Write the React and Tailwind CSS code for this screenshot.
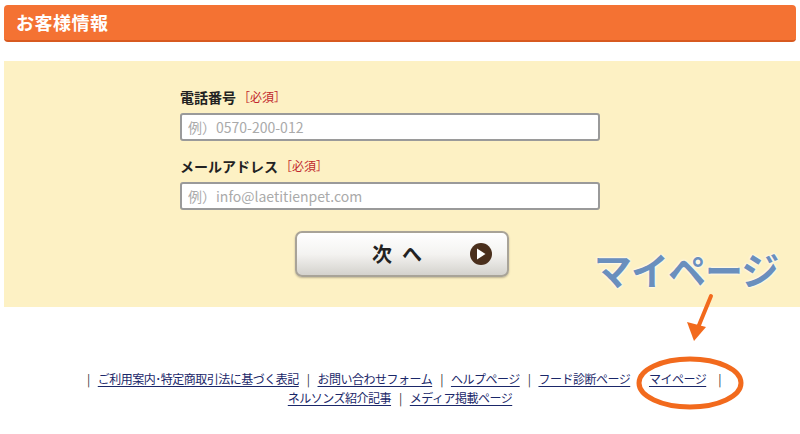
import React from 'react';

const jp = { fontFamily: '"Noto Sans CJK JP", "Noto Sans", sans-serif' };

const Required = () => <span className="ml-[2px] text-[12px] font-normal text-[#c1272d]">［必須］</span>;

const Field = ({ label, placeholder }) => (
  <div className="flex flex-col">
    <div className="flex items-center h-[20px] text-[14px] font-bold text-[#222]">
      {label}
      <Required />
    </div>
    <input
      className="mt-[6px] w-[420px] h-[28px] rounded-[3px] border-2 border-[#9a9a9a] bg-white px-[6px] text-[14px] text-[#333] placeholder:text-[#aaaaaa] outline-none"
      placeholder={placeholder}
      style={jp}
    />
  </div>
);

const footerLinks = [
  ['ご利用案内･特定商取引法に基づく表記', 'お問い合わせフォーム', 'ヘルプページ', 'フード診断ページ', 'マイページ'],
  ['ネルソンズ紹介記事', 'メディア掲載ページ'],
];

export default function App() {
  return (
    <div className="relative w-[800px] h-[434px] bg-white overflow-hidden" style={jp}>
      {/* Header bar */}
      <div className="mx-[4px] mt-[5px] h-[37px] rounded-[4px] bg-[#f47233] border-b-2 border-[#d85a20] flex items-center px-[12px]">
        <h1 className="text-[18px] font-bold text-white tracking-[0.5px]">お客様情報</h1>
      </div>

      {/* Form panel */}
      <div className="ml-[4px] mt-[19px] h-[246px] bg-[#fdf1c4] pt-[26px]">
        <div className="ml-[176px] flex flex-col gap-[15px]">
          <Field label="電話番号" placeholder="例）0570-200-012" />
          <Field label="メールアドレス" placeholder="例）info@laetitienpet.com" />
        </div>
        <div className="mt-[21px] ml-[291px]">
          <button className="relative flex items-center justify-center w-[214px] h-[46px] rounded-[7px] border-2 border-[#a8a398] bg-gradient-to-b from-white via-[#f4f3f1] to-[#d4d2cd] shadow-[0_1px_2px_rgba(0,0,0,0.25)]">
            <span className="text-[20px] font-bold text-[#222] tracking-[10px] ml-[0px]">次へ</span>
            <span className="absolute right-[15px] top-1/2 -translate-y-1/2 w-[22px] h-[22px] rounded-full bg-[#4a2f1c] flex items-center justify-center">
              <svg width="10" height="12" viewBox="0 0 10 12">
                <path d="M1 0.5 L9.5 6 L1 11.5 Z" fill="white" />
              </svg>
            </span>
          </button>
        </div>
      </div>

      {/* Footer links */}
      <div className="mt-[62px] flex flex-col items-center text-[12px] leading-[19px] tracking-[-0.5px]">
        {footerLinks.map((row, i) => (
          <div key={i} className={i === 0 ? 'ml-[0px]' : 'ml-[0px]'}>
            {row.map((t, j) => (
              <span key={t}>
                {(i === 0 || j > 0) && <span className="text-[#333] mx-[8px]">|</span>}
                <a href="#" className="text-[#1a2769] underline underline-offset-2">{t}</a>
                {i === 0 && j === row.length - 1 && <span className="text-[#333] ml-[12px]">|</span>}
              </span>
            ))}
          </div>
        ))}
      </div>

      {/* Annotation: label, arrow, circle */}
      <div
        className="absolute left-[594px] top-[240px] text-[38px] font-bold text-[#6a8fbd] tracking-[-1px]"
        style={{ textShadow: '0 0 3px #fff, 0 0 2px #fff' }}
      >
        マイページ
      </div>
      <svg className="absolute left-0 top-0" width="800" height="434" viewBox="0 0 800 434">
        <line x1="711" y1="296" x2="697" y2="330" stroke="#f26a1d" strokeWidth="4" strokeLinecap="round" />
        <path d="M687 322 L694 341 L706 327 Z" fill="#f26a1d" />
        <ellipse cx="690" cy="383" rx="51" ry="24" fill="none" stroke="#f26a1d" strokeWidth="5" />
      </svg>
    </div>
  );
}
